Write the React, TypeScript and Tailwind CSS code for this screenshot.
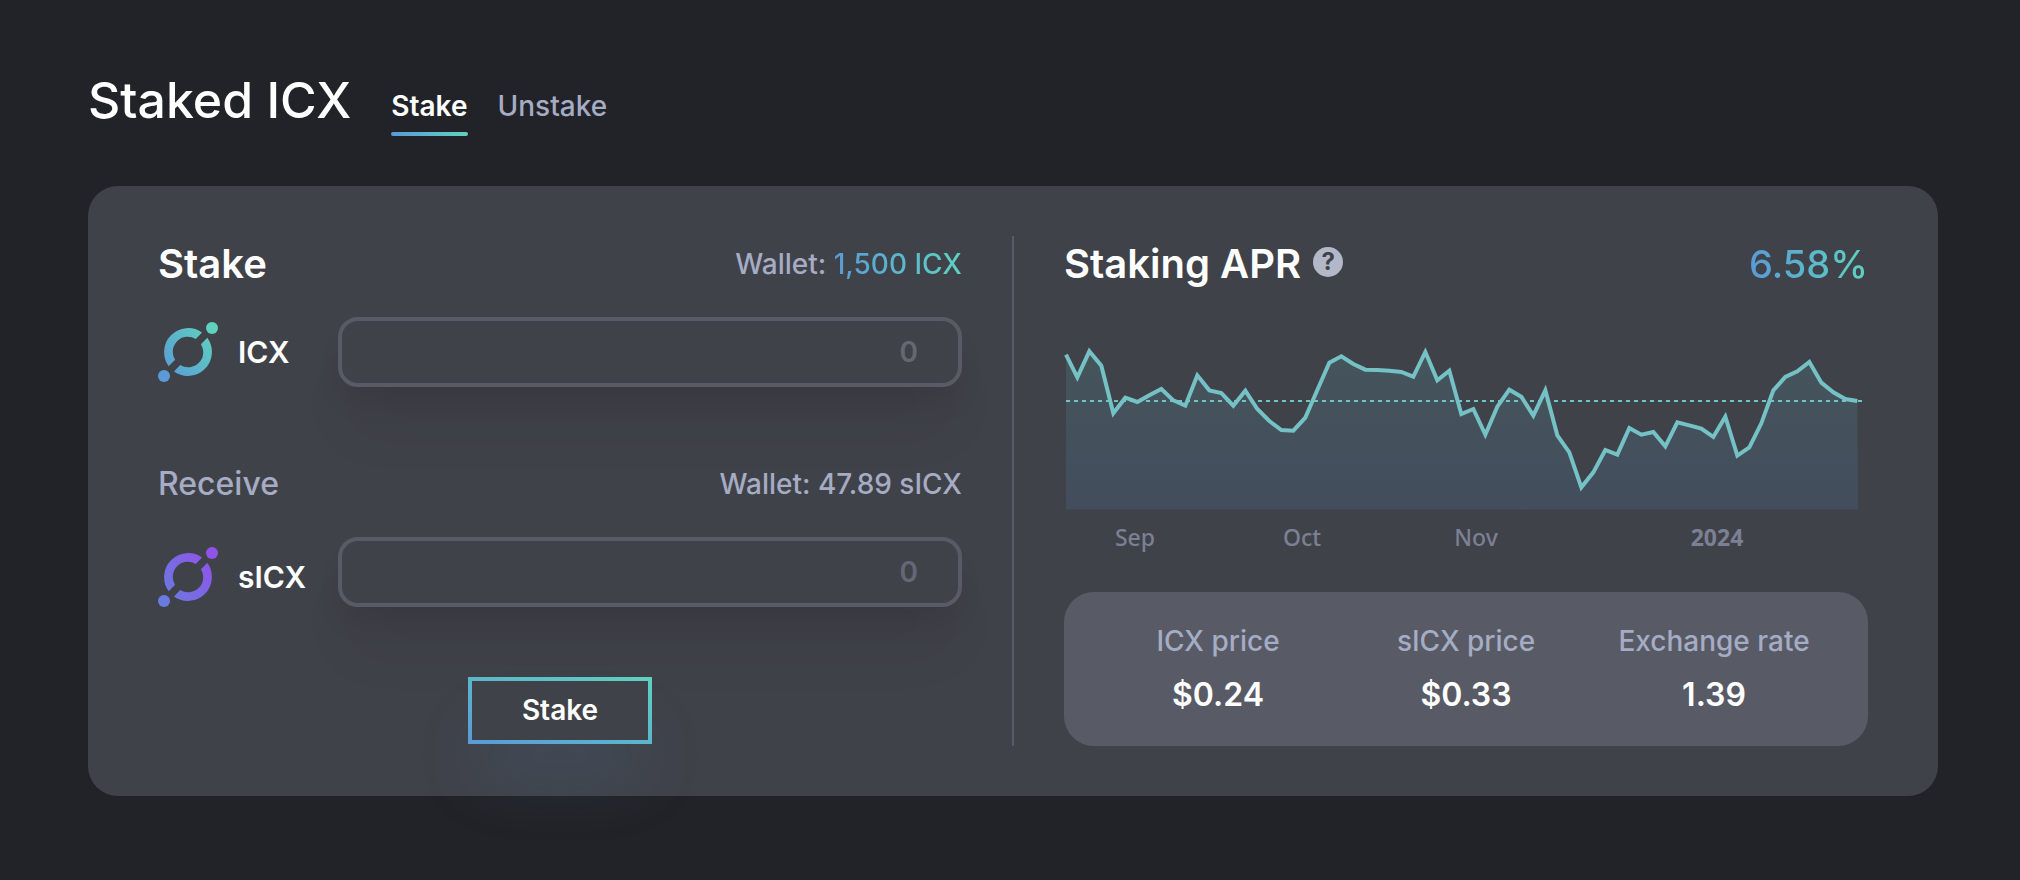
import { useId } from "react";

const FONT = "font-['Inter','Liberation_Sans',sans-serif]";

// Rate samples, in thirds of a chart unit measured down from the top edge.
const SAMPLES = [
  44, 112, 34, 77, 220, 173, 186, 166, 147, 181, 197, 106, 151, 159, 197, 152,
  207, 243, 270, 272, 233, 150, 68, 49, 72, 89, 90, 92, 96, 110, 36, 121, 92,
  222, 207, 284, 200, 149, 170, 227, 151, 286, 337, 442, 397, 330, 344, 264,
  284, 276, 319, 247, 256, 266, 291, 230, 347, 322, 250, 151, 111, 94, 66, 128,
  157, 177, 183,
];

const POINTS = SAMPLES.map(
  (v, i) => `${(i === 0 ? 2 : 1.33 + i * 12).toFixed(2)},${(v / 3).toFixed(2)}`
);

const MONTHS = [
  { label: "Sep", x: 71, bold: false },
  { label: "Oct", x: 238, bold: false },
  { label: "Nov", x: 412, bold: false },
  { label: "2024", x: 653, bold: true },
];

function TokenIcon({ from, to }: { from: string; to: string }) {
  const id = useId();
  return (
    <svg viewBox="-30 -30 60 60" className="size-[60px] shrink-0" aria-hidden="true">
      <defs>
        <linearGradient id={id} gradientUnits="userSpaceOnUse" x1="-26" y1="20" x2="26" y2="-20">
          <stop offset="0" stopColor={from} />
          <stop offset="1" stopColor={to} />
        </linearGradient>
      </defs>
      <g fill={`url(#${id})`}>
        <path d="M14 -19.5A24 24 0 0 0 -19.3 14.2L-12.9 7.8A15 15 0 0 1 7.8 -12.9Z" />
        <path d="M-14 19.5A24 24 0 0 0 19.3 -14.2L12.9 -7.8A15 15 0 0 1 -7.8 12.9Z" />
        <circle cx="24" cy="-24" r="6" />
        <circle cx="-24" cy="24" r="6" />
      </g>
    </svg>
  );
}

function AmountField({
  id,
  token,
  from,
  to,
  align,
}: {
  id: string;
  token: string;
  from: string;
  to: string;
  align: string;
}) {
  return (
    <div className={`mt-[25px] flex ${align}`}>
      <label
        htmlFor={id}
        className="flex w-[180px] shrink-0 items-center gap-5 text-[30px] leading-9 font-semibold text-white"
      >
        <TokenIcon from={from} to={to} />
        {token}
      </label>
      <input
        id={id}
        type="text"
        inputMode="decimal"
        placeholder="0"
        className="h-[70px] min-w-0 flex-1 rounded-[20px] border-4 border-[#585a66] bg-[#404249] px-10 text-right text-[28px] font-semibold text-white shadow-[0_20px_30px_-8px_rgba(0,0,0,0.1),0_50px_60px_-10px_rgba(0,0,0,0.06)] outline-none placeholder:text-[#656774]"
      />
    </div>
  );
}

function AprChart() {
  return (
    <svg viewBox="0 0 804 212" className="mt-12 w-full" role="img" aria-label="Staking APR over time">
      <defs>
        <linearGradient id="apr-fill" x1="0" y1="0" x2="0" y2="1">
          <stop offset="0" stopColor="#45555b" />
          <stop offset="1" stopColor="#434d5d" />
        </linearGradient>
      </defs>
      <polygon points={`2,169.5 ${POINTS.join(" ")} 794,169.5`} fill="url(#apr-fill)" />
      <line x1="2" x2="798" y1="61" y2="61" stroke="#6ec5c4" strokeWidth="2" strokeDasharray="4 4" />
      <polyline points={POINTS.join(" ")} fill="none" stroke="#74c2c5" strokeWidth="4" />
      {MONTHS.map((m) => (
        <text
          key={m.label}
          x={m.x}
          y="206"
          textAnchor="middle"
          fill="#7c8094"
          className={`font-['Noto_Sans',sans-serif] text-[23px] ${m.bold ? "font-bold" : "font-medium"}`}
        >
          {m.label}
        </text>
      ))}
    </svg>
  );
}

const STATS = [
  ["ICX price", "$0.24"],
  ["sICX price", "$0.33"],
  ["Exchange rate", "1.39"],
];

export default function App() {
  return (
    <main className={`min-h-screen bg-[#222328] pt-16 pr-[82px] pb-[84px] pl-[88px] ${FONT}`}>
      <header className="flex items-end gap-10">
        <h1 className="text-[50px] leading-[72px] font-medium text-white">Staked ICX</h1>
        <nav className="flex gap-[30px] text-[28px] leading-[34px]">
          <button type="button" className="flex flex-col gap-[9px] font-semibold text-white">
            Stake
            <span className="h-1 w-full rounded-sm bg-linear-to-r from-[#5a9ad6] to-[#5fd2bf]" />
          </button>
          <button type="button" className="flex flex-col pb-[13px] font-medium text-[#a5acc4]">
            Unstake
          </button>
        </nav>
      </header>

      <div className="mt-[50px] flex rounded-[30px] bg-[#404249] px-[70px] py-[50px]">
        <section className="flex flex-1 flex-col pr-[50px]">
          <div className="flex h-14 items-center justify-between">
            <h2 className="text-[40px] font-semibold text-white">Stake</h2>
            <p className="text-[28px] font-medium text-[#a5acc4]">
              Wallet:{" "}
              <span className="bg-linear-to-r from-[#5a9ad6] to-[#5fd2bf] bg-clip-text text-transparent">
                1,500 ICX
              </span>
            </p>
          </div>
          <AmountField id="stake-amount" token="ICX" from="#5a9ad6" to="#5fd2bf" align="items-center" />

          <div className="mt-[69px] flex h-14 items-center justify-between">
            <h3 className="text-[32px] font-medium text-[#a5acc4]">Receive</h3>
            <p className="text-[28px] font-medium text-[#a5acc4]">Wallet: 47.89 sICX</p>
          </div>
          <AmountField id="receive-amount" token="sICX" from="#697be0" to="#9152e8" align="items-end" />

          <button
            type="button"
            className="mt-[70px] self-center border-4 border-transparent px-[50px] py-3 text-[28px] leading-[35px] font-semibold text-white shadow-[0_44px_64px_-12px_rgba(68,122,170,0.22)] [background:linear-gradient(#404249,#404249)_padding-box,linear-gradient(to_top_right,#5a9ad6,#5fd2bf)_border-box]"
          >
            Stake
          </button>
        </section>

        <div className="w-0.5 bg-[#585a66]" />

        <section className="flex flex-1 flex-col pl-[50px]">
          <div className="flex h-14 items-center justify-between">
            <div className="flex items-center gap-3">
              <h2 className="text-[40px] font-semibold text-white">Staking APR</h2>
              <button
                type="button"
                aria-label="About staking APR"
                className="mb-1 flex size-[30px] items-center justify-center rounded-full bg-[#b3b8c8] text-2xl leading-none font-bold text-[#404249]"
              >
                ?
              </button>
            </div>
            <p className="bg-linear-to-r from-[#5a9ad6] to-[#5fd2bf] bg-clip-text text-[38px] font-medium text-transparent">
              6.58%
            </p>
          </div>
          <AprChart />
          <dl className="mt-10 grid h-[154px] grid-cols-3 content-center rounded-[30px] bg-[#585b66] px-[30px] pb-0.5 text-center">
            {STATS.map(([name, value]) => (
              <div key={name} className="flex flex-col gap-5">
                <dt className="text-[28px] leading-[34px] font-medium text-[#a5acc4]">{name}</dt>
                <dd className="text-[32px] leading-[34px] font-semibold text-white">{value}</dd>
              </div>
            ))}
          </dl>
        </section>
      </div>
    </main>
  );
}
